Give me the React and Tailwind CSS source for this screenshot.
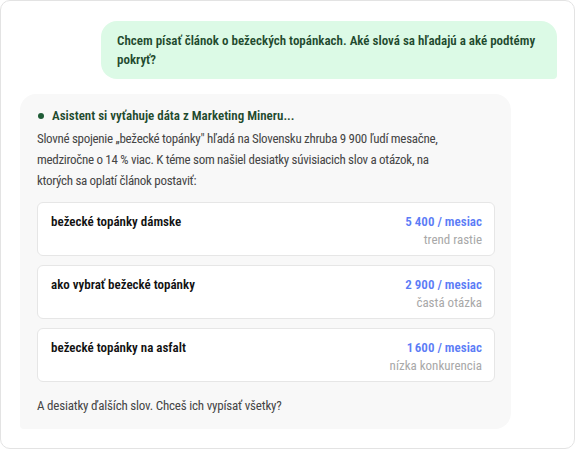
import React from "react";

const keywords = [
  { term: "bežecké topánky dámske", volume: "5 400 / mesiac", note: "trend rastie" },
  { term: "ako vybrať bežecké topánky", volume: "2 900 / mesiac", note: "častá otázka" },
  { term: "bežecké topánky na asfalt", volume: "1\u202F600 / mesiac", note: "nízka konkurencia" },
];

const KeywordCard = ({ item }) => (
  <div className="flex justify-between bg-white border border-[#e6e6e6] rounded-md h-[54px] pl-[13px] pr-[12px] pt-[10px]">
    <div className="text-[13px] font-semibold text-[#111] leading-[18px]">{item.term}</div>
    <div className="flex flex-col items-end leading-[18px]">
      <span className="text-[13px] font-semibold text-[#5b7cf6]">{item.volume}</span>
      <span className="text-[13px] text-[#a8a8a8]">{item.note}</span>
    </div>
  </div>
);

export default function App() {
  return (
    <div className="w-[575px] h-[450px] bg-white font-['Roboto_Condensed','Roboto',sans-serif]">
      <div className="h-[449px] border border-[#e3e3e3] rounded-[10px] pt-[20px] pl-[19px] pr-[17px]">
        <div className="flex justify-end">
          <div className="w-[456px] bg-[#dcfae6] rounded-[16px] rounded-br-[4px] pl-[16px] pr-[14px] pt-[10px] pb-[10px] text-[13px] font-semibold text-[#1f4a2e] leading-[19px]">
            Chcem písať článok o bežeckých topánkach. Aké slová sa hľadajú a aké podtémy pokryť?
          </div>
        </div>
        <div className="mt-[15px] w-[491px] bg-[#f8f8f8] rounded-[16px] rounded-bl-[4px] pl-[17px] pr-[16px] pt-[13px] pb-[13px]">
          <div className="flex items-center gap-[8px] text-[13px] font-semibold text-[#1f4a2e] leading-[18px]">
            <span className="w-[6px] h-[6px] rounded-full bg-[#1f5c36] ml-[1px]"></span>
            Asistent si vyťahuje dáta z Marketing Mineru...
          </div>
          <p className="mt-[3px] text-[13px] tracking-[-0.3px] text-[#454545] leading-[21px]">
            Slovné spojenie „bežecké topánky" hľadá na Slovensku zhruba 9 900 ľudí mesačne, medziročne o 14 % viac. K téme som našiel desiatky súvisiacich slov a otázok, na
            <br />
            ktorých sa oplatí článok postaviť:
          </p>
          <div className="mt-[11px] flex flex-col gap-[9px]">
            {keywords.map((k) => (
              <KeywordCard key={k.term} item={k} />
            ))}
          </div>
          <p className="mt-[14px] text-[13px] tracking-[-0.2px] text-[#454545] leading-[20px]">
            A desiatky ďalších slov. Chceš ich vypísať všetky?
          </p>
        </div>
      </div>
    </div>
  );
}
